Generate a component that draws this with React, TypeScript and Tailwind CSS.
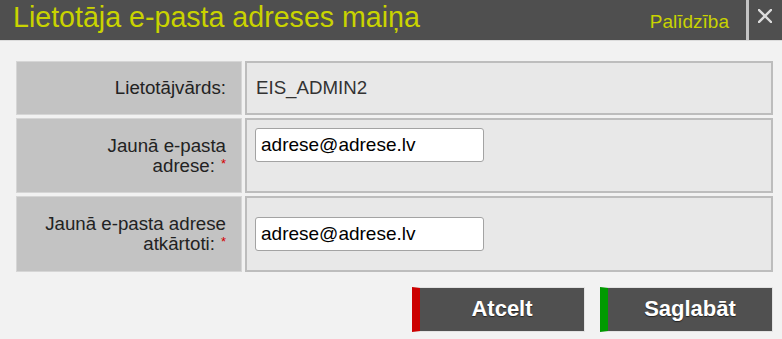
import React from "react";

const Star = () => (
  <span className="text-[#d40000] text-[13px] align-top relative top-[-2px] ml-[6px]">*</span>
);

export default function App() {
  return (
    <div className="w-[782px] h-[339px] bg-[#f2f2f2] font-['Liberation_Sans',Arial,sans-serif] overflow-hidden">
      <div className="h-[41px] bg-[#4f4f4f] flex items-stretch border-b border-[#dcdcdc]">
        <div className="pl-[13px] pt-[3px] text-[28.6px] leading-[28px] text-[#c9d300]">
          Lietotāja e-pasta adreses maiņa
        </div>
        <div className="ml-auto pt-[12px] text-[19px] leading-[19px] text-[#c9d300] pr-[17px]">
          Palīdzība
        </div>
        <div className="w-[3px] bg-[#c4c4c4]" />
        <div className="w-[33px] flex items-start pt-[9px] pl-[9px]">
          <svg width="14" height="14" viewBox="0 0 14 14">
            <path d="M1 1 L13 13 M13 1 L1 13" stroke="#dcdcdc" strokeWidth="2.4" strokeLinecap="square" />
          </svg>
        </div>
      </div>

      <div className="pt-[20px] pl-[16px] pr-[9px]">
        <div className="grid grid-cols-[226px_1fr] grid-rows-[54px_75px_76px] gap-x-[3px] gap-y-[3px]">
          <div className="bg-[#c3c3c3] border border-[#d6d6d6] flex items-center justify-end pr-[15px] text-[18.7px] leading-[20px] text-[#222]">
            Lietotājvārds:
          </div>
          <div className="bg-[#e8e8e8] border-2 border-[#bdbdbd] flex items-center pl-[9px] text-[18.7px] text-[#333]">
            EIS_ADMIN2
          </div>

          <div className="bg-[#c3c3c3] border border-[#d6d6d6] flex items-center justify-end pr-[15px] text-[18.7px] leading-[20px] text-[#222] text-right">
            <div>
              Jaunā e-pasta
              <br />
              adrese:<Star />
            </div>
          </div>
          <div className="bg-[#e8e8e8] border-2 border-[#bdbdbd] flex items-start pt-[8px] pl-[8px]">
            <div className="w-[229px] h-[34px] bg-white border border-[#a3a3a3] rounded-[3px] flex items-center pl-[5px] text-[19px] text-black">
              adrese@adrese.lv
            </div>
          </div>

          <div className="bg-[#c3c3c3] border border-[#d6d6d6] flex items-center justify-end pr-[15px] text-[18.7px] leading-[20px] text-[#222] text-right">
            <div>
              Jaunā e-pasta adrese
              <br />
              atkārtoti:<Star />
            </div>
          </div>
          <div className="bg-[#e8e8e8] border-2 border-[#bdbdbd] flex items-center pl-[8px]">
            <div className="w-[229px] h-[34px] bg-white border border-[#a3a3a3] rounded-[3px] flex items-center pl-[5px] text-[19px] text-black">
              adrese@adrese.lv
            </div>
          </div>
        </div>

        <div className="flex justify-end gap-[15px] mt-[15px]">
          <button className="w-[173px] h-[45px] bg-[#505050] border border-[#e2e2e2] border-l-[8px] border-l-[#cc0000] text-white font-bold text-[22px] [text-shadow:0_1px_1px_#222] pb-[3px]">
            Atcelt
          </button>
          <button className="w-[173px] h-[45px] bg-[#505050] border border-[#e2e2e2] border-l-[8px] border-l-[#009a00] text-white font-bold text-[22px] [text-shadow:0_1px_1px_#222] pb-[3px]">
            Saglabāt
          </button>
        </div>
      </div>
    </div>
  );
}
